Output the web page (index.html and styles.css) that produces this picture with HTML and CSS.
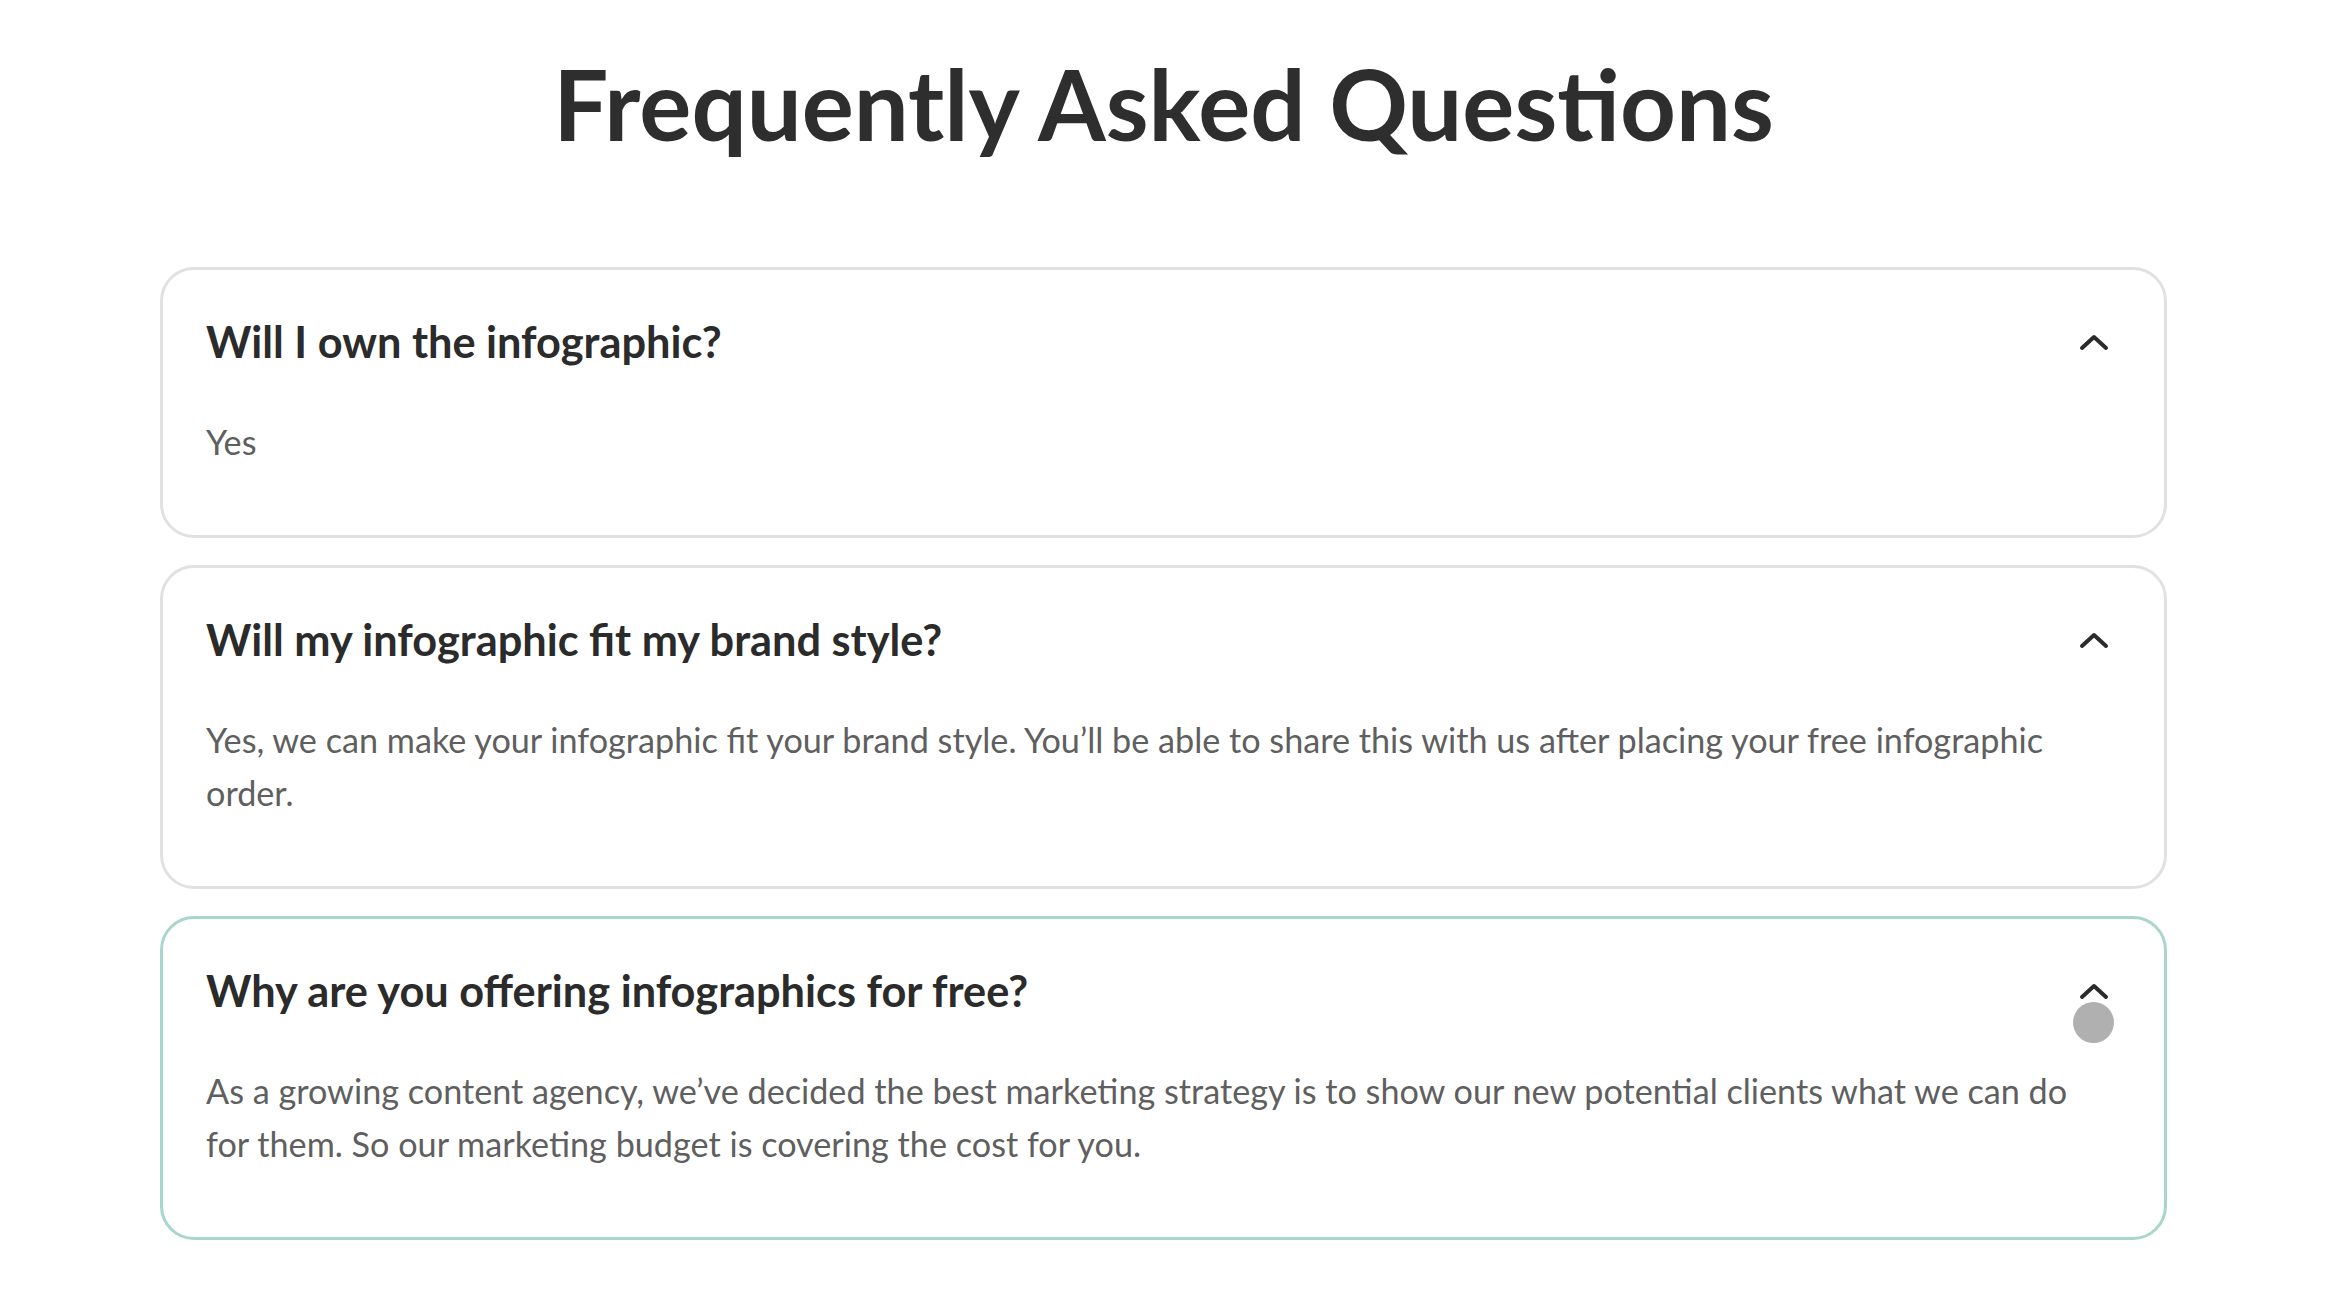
FILE: index.html
```html
<!DOCTYPE html>
<html lang="en">
<head>
<meta charset="utf-8">
<title>Frequently Asked Questions</title>
<link rel="stylesheet" href="styles.css">
</head>
<body>
<main class="faq">
  <h1 class="faq-title">Frequently Asked Questions</h1>
  <div class="faq-list">
    <section class="faq-item">
      <div class="faq-head">
        <h2 class="faq-q">Will I own the infographic?</h2>
        <svg class="chev" width="30" height="18" viewBox="0 0 30 18"><path d="M3 15 L15 4 L27 15" fill="none" stroke="#2b2b2b" stroke-width="4" stroke-linecap="round" stroke-linejoin="round"/></svg>
      </div>
      <p class="faq-a">Yes</p>
    </section>
    <section class="faq-item">
      <div class="faq-head">
        <h2 class="faq-q">Will my infographic fit my brand style?</h2>
        <svg class="chev" width="30" height="18" viewBox="0 0 30 18"><path d="M3 15 L15 4 L27 15" fill="none" stroke="#2b2b2b" stroke-width="4" stroke-linecap="round" stroke-linejoin="round"/></svg>
      </div>
      <p class="faq-a">Yes, we can make your infographic fit your brand style. You’ll be able to share this with us after placing your free infographic order.</p>
    </section>
    <section class="faq-item active">
      <div class="faq-head">
        <h2 class="faq-q">Why are you offering infographics for free?</h2>
        <svg class="chev" width="30" height="18" viewBox="0 0 30 18"><path d="M3 15 L15 4 L27 15" fill="none" stroke="#2b2b2b" stroke-width="4" stroke-linecap="round" stroke-linejoin="round"/></svg>
        <span class="cursor"></span>
      </div>
      <p class="faq-a">As a growing content agency, we’ve decided the best marketing strategy is to show our new potential clients what we can do for them. So our marketing budget is covering the cost for you.</p>
    </section>
  </div>
</main>
</body>
</html>
```

FILE: styles.css
```css
html, body {
  margin: 0;
  padding: 0;
  background: #ffffff;
}

body {
  font-family: Lato, "Open Sans", sans-serif;
  color: #2d2d2d;
}

.faq {
  width: 2007px;
  margin: 0 auto;
  padding-top: 45px;
}

.faq-title {
  margin: 0 0 105px;
  text-align: center;
  font-size: 97.5px;
  line-height: 1.2;
  font-weight: 700;
  color: #2e2e2e;
}

.faq-list {
  display: flex;
  flex-direction: column;
  gap: 27px;
}

.faq-item {
  border: 3px solid #e1e1e1;
  border-radius: 34px;
  padding: 46px 43px 67px;
  background: #fff;
}

.faq-item.active {
  border-color: #a9d6cc;
}

.faq-head {
  position: relative;
  display: flex;
  align-items: center;
  justify-content: space-between;
}

.faq-q {
  margin: 0;
  font-size: 43.3px;
  line-height: 1.2;
  font-weight: 700;
  color: #2b2b2b;
}

.chev {
  margin-right: 12px;
  flex: none;
}

.cursor {
  position: absolute;
  right: 7px;
  top: 37px;
  width: 41px;
  height: 41px;
  border-radius: 50%;
  background: #b0b0b0;
}

.faq-a {
  margin: 47px 0 0;
  font-size: 34.2px;
  line-height: 53px;
  color: #5f5f5f;
  padding-right: 40px;
}
```
